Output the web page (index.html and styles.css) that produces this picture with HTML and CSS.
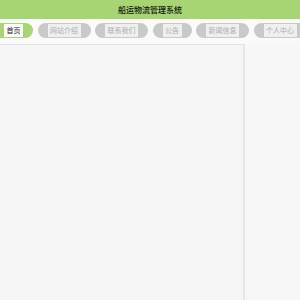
FILE: index.html
```html
<!DOCTYPE html>
<html lang="zh-CN">
<head>
    <meta charset="UTF-8">
    <meta name="viewport" content="width=device-width, initial-scale=1.0">
    <title>船运物流管理系统</title>
    <link rel="stylesheet" href="styles.css">
</head>
<body>
    <div class="top">船运物流管理系统</div>

    <div class="menu">
        <a href="#" class="tab active"><span>首页</span></a>
        <a href="#" class="tab"><span>网站介绍</span></a>
        <a href="#" class="tab"><span>联系我们</span></a>
        <a href="#" class="tab"><span>公告</span></a>
        <a href="#" class="tab"><span>新闻信息</span></a>
        <a href="#" class="tab"><span>个人中心</span></a>
    </div>

    <div class="main">
        <div class="panel"></div>
        <div class="side"></div>
    </div>
</body>
</html>
```

FILE: styles.css
```css
* {
    margin: 0;
    padding: 0;
    box-sizing: border-box;
}

body {
    font-family: "Noto Sans CJK SC", "Noto Sans", sans-serif;
    background-color: #fafafa;
    height: 100vh;
    overflow: hidden;
    display: flex;
    flex-direction: column;
}

.top {
    height: 19px;
    line-height: 19px;
    background-color: #a8d574;
    color: #111;
    font-size: 8px;
    font-weight: 500;
    text-align: center;
}

.menu {
    display: flex;
    gap: 4.5px;
    padding: 4px 0 6px;
    margin-left: -6px;
    white-space: nowrap;
}

.tab {
    display: flex;
    align-items: center;
    height: 15px;
    padding: 1px 10px;
    border-radius: 8px;
    background-color: #c9c9c9;
    text-decoration: none;
    flex-shrink: 0;
}

.tab span {
    display: block;
    height: 13px;
    line-height: 13px;
    padding: 0 2.5px;
    font-size: 7px;
    background-color: #efefef;
    color: #adadad;
}

.tab.active {
    background-color: #a8d574;
}

.tab.active span {
    background-color: #fff;
    color: #222;
}

.main {
    flex: 1;
    display: flex;
}

.panel {
    width: 245px;
    background-color: #f5f5f5;
    border-top: 1px solid #e3e3e3;
    border-right: 2px solid #e6e6e6;
}

.side {
    flex: 1;
    background-color: #f7f7f7;
}
```
